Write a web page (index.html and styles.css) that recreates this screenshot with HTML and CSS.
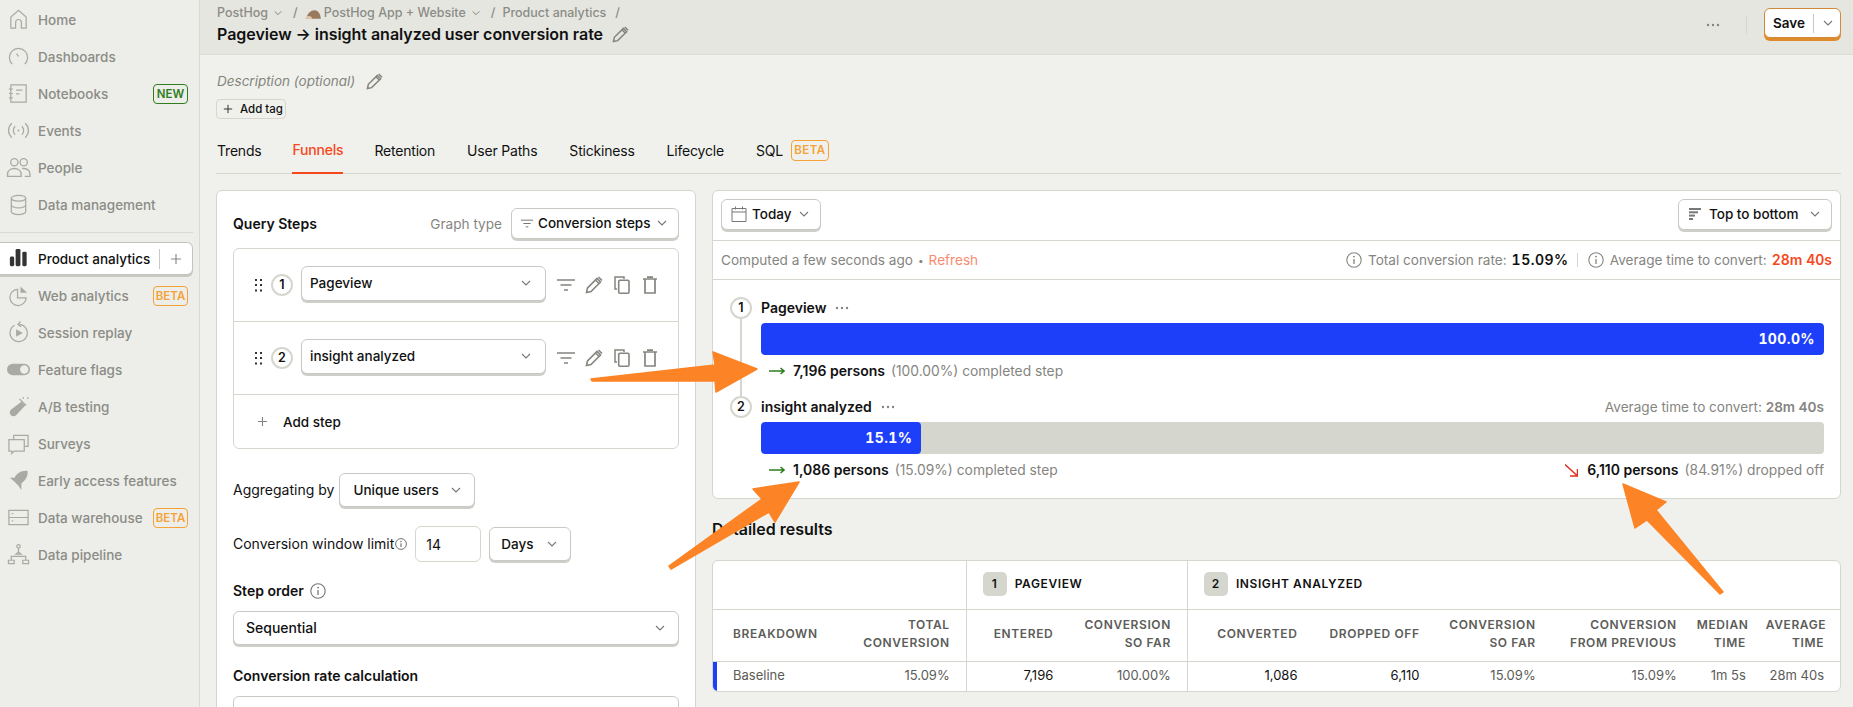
FILE: index.html
```html
<!DOCTYPE html>
<html lang="en">
<head>
  <meta charset="UTF-8" />
  <meta name="viewport" content="width=device-width, initial-scale=1.0"/>
  <title>Pageview → insight analyzed user conversion rate</title>
  <link rel="stylesheet" href="styles.css">
</head>
<body>

  <!-- shared icons -->
  <svg class="icon-defs" aria-hidden="true">
    <symbol id="chev" viewBox="0 0 12 12"><path d="M2 4l4 4 4-4" fill="none" stroke="currentColor" stroke-width="1.1"/></symbol>
    <symbol id="pencil" viewBox="0 0 18 18"><path d="M1.5 16.5l1-4.5L12 2.5l3.5 3.5L6 15.5z M10.5 4l3.5 3.5 M13.5 1l3.5 3.5" fill="none" stroke="currentColor" stroke-width="1.6"/></symbol>
    <symbol id="filter" viewBox="0 0 18 12"><path d="M0 1h18M3.5 6h11M7 11h4" fill="none" stroke="currentColor" stroke-width="1.5"/></symbol>
    <symbol id="copy" viewBox="0 0 16 18"><path d="M3 13H1V1h9v2" fill="none" stroke="currentColor" stroke-width="1.5"/><rect x="4.7" y="4.2" width="10.3" height="13" rx="1.2" fill="none" stroke="currentColor" stroke-width="1.6"/></symbol>
    <symbol id="trash" viewBox="0 0 14 18"><path d="M0 3h14M4 1.2h6M2 3.5V17h10V3.5" fill="none" stroke="currentColor" stroke-width="1.7"/></symbol>
    <symbol id="info" viewBox="0 0 16 16"><circle cx="8" cy="8" r="7.2" fill="none" stroke="currentColor" stroke-width="1.1"/><path d="M8 7v5" stroke="currentColor" stroke-width="1.3"/><circle cx="8" cy="4.6" r=".9" fill="currentColor"/></symbol>
    <symbol id="plus" viewBox="0 0 12 12"><path d="M6 1v10M1 6h10" fill="none" stroke="currentColor" stroke-width="1.2"/></symbol>
    <symbol id="dots" viewBox="0 0 14 4"><circle cx="2" cy="2" r="1.2" fill="currentColor"/><circle cx="7" cy="2" r="1.2" fill="currentColor"/><circle cx="12" cy="2" r="1.2" fill="currentColor"/></symbol>
    <symbol id="drag" viewBox="0 0 7 13"><g fill="#333"><rect width="2" height="2"/><rect x="5" width="2" height="2"/><rect y="5" width="2" height="2"/><rect x="5" y="5" width="2" height="2"/><rect y="10.5" width="2" height="2"/><rect x="5" y="10.5" width="2" height="2"/></g></symbol>
    <symbol id="arrow-right" viewBox="0 0 16 8"><path d="M0 4h15M11.5 1l3.5 3-3.5 3" fill="none" stroke="#2f7d1f" stroke-width="1.5"/></symbol>
  </svg>

  <aside class="sidebar">
    <ul class="nav">
      <li class="nav-item">
        <svg class="nav-icon" viewBox="0 0 24 24"><path d="M4 21V9.5l8-7 8 7V21h-5v-6a3 3 0 0 0-6 0v6z"/></svg>
        <span>Home</span>
      </li>
      <li class="nav-item">
        <svg class="nav-icon" viewBox="0 0 24 24"><path d="M5.5 20a9.5 9.5 0 1 1 13 0M10 9l2 3"/></svg>
        <span>Dashboards</span>
      </li>
      <li class="nav-item">
        <svg class="nav-icon" viewBox="0 0 24 24"><path d="M4 3h16v18H4zM2 7.5h4M2 12h4M2 16.5h4M9.5 8.5h6.500M9.500 12.500h3.500"/></svg>
        <span>Notebooks</span>
        <em class="badge badge-new">NEW</em>
      </li>
      <li class="nav-item">
        <svg class="nav-icon" viewBox="0 0 24 24"><path d="M5 4.5c-4.500 4.500-4.500 10.500 0 15M19 4.500c4.500 4.500 4.500 10.500 0 15M8.500 7.500c-2.500 2.500-2.500 6.500 0 9M15.500 7.500c2.500 2.500 2.500 6.500 0 9"/><circle cx="12" cy="12" r="1" class="solid"/></svg>
        <span>Events</span>
      </li>
      <li class="nav-item">
        <svg class="nav-icon nav-icon-wide" viewBox="0 0 24 24"><circle cx="8" cy="7" r="3.500"/><circle cx="17" cy="7" r="3.500"/><path d="M1.500 20.500v-2c0-3.500 3-5.500 6.500-5.500s6.500 2 6.500 5.500v2zM15.500 13c4-.5 7.500 1.500 7.500 5v2.500h-5"/></svg>
        <span>People</span>
      </li>
      <li class="nav-item">
        <svg class="nav-icon" viewBox="0 0 24 24"><ellipse cx="12" cy="5.500" rx="7.500" ry="3"/><path d="M4.500 5.500v14c0 1.500 3.500 3 7.500 3s7.500-1.500 7.500-3v-14M4.500 12.500c0 1.500 3.500 3 7.500 3s7.500-1.500 7.500-3"/></svg>
        <span>Data management</span>
      </li>
    </ul>

    <hr class="nav-divider">

    <div class="nav-active">
      <svg class="nav-icon" viewBox="0 0 24 24"><g class="solid-dark"><rect x="3" y="10" width="4.500" height="10" rx="1.500"/><rect x="9" y="2" width="5" height="18" rx="1.500"/><rect x="16" y="5" width="4.500" height="15" rx="1.500"/></g></svg>
      <span class="nav-active-label">Product analytics</span>
      <i class="nav-active-sep"></i>
      <svg class="nav-active-plus"><use href="#plus"/></svg>
    </div>

    <ul class="nav">
      <li class="nav-item">
        <svg class="nav-icon" viewBox="0 0 24 24"><path d="M11 5.500a8.500 8.500 0 1 0 9 9h-9z"/><path d="M14 2.500l7 6.500h-7z" class="solid"/></svg>
        <span>Web analytics</span>
        <em class="badge badge-beta">BETA</em>
      </li>
      <li class="nav-item">
        <svg class="nav-icon" viewBox="0 0 24 24"><path d="M8 4.500a9 9 0 1 0 5-1M14 .5l-2.500 3 3 2.500"/><path d="M9.500 8.500l7 4-7 4z" class="solid"/></svg>
        <span>Session replay</span>
      </li>
      <li class="nav-item">
        <svg class="nav-icon nav-icon-wide" viewBox="0 0 24 24"><rect x="1" y="6.500" width="22" height="11" rx="5.500" class="solid"/><circle cx="17.500" cy="12" r="4" class="knockout"/></svg>
        <span>Feature flags</span>
      </li>
      <li class="nav-item">
        <svg class="nav-icon" viewBox="0 0 24 24"><path d="M15 7l4 4-9.500 10c-1.500 1.500-4 1.500-5.500 0s-1.500-4 0-5.500z" class="solid"/><path d="M13 4l7 7M17 2v2M21 4l1.500-1.500"/></svg>
        <span>A/B testing</span>
      </li>
      <li class="nav-item">
        <svg class="nav-icon" viewBox="0 0 24 24"><path d="M7 8V3.500h15V15h-4"/><path d="M2 8h16v12H7.500l-2.500 2.500V20H2z"/></svg>
        <span>Surveys</span>
      </li>
      <li class="nav-item">
        <svg class="nav-icon" viewBox="0 0 24 24"><path d="M21.500 2c-7-.5-11 2.500-13.500 7H3l4 3.500 4.500 4.500 3.500 5V15c4-3 7-7 6.500-13z" class="solid"/></svg>
        <span>Early access features</span>
      </li>
      <li class="nav-item">
        <svg class="nav-icon" viewBox="0 0 24 24"><path d="M2 4.500h20v15H2zM2 12h20M5 8h1.500M5 15.500h1.500"/></svg>
        <span>Data warehouse</span>
        <em class="badge badge-beta">BETA</em>
      </li>
      <li class="nav-item">
        <svg class="nav-icon" viewBox="0 0 24 24"><circle cx="12" cy="3.500" r="1.800"/><path d="M12 5.500v4M9.500 11.500h5l-2.500-2zM4.500 18v-4h15v4M1.500 18h6v3.500h-6zM16.500 18h6v3.500h-6z"/></svg>
        <span>Data pipeline</span>
      </li>
    </ul>
  </aside>

  <main class="main">
    <header class="topbar">
      <div>
        <div class="crumbs">
          <span>PostHog</span><svg class="chev"><use href="#chev"/></svg>
          <span class="crumb-sep">/</span>
          <svg class="hedgehog" viewBox="0 0 16 10"><path d="M1 9 Q3 1 9 1 Q14 1 15 9z" fill="#9a7a5f"/><path d="M0 9c1-3 4-3 6-2l1 2.500z" fill="#e3c7a8"/></svg>
          <span>PostHog App + Website</span><svg class="chev"><use href="#chev"/></svg>
          <span class="crumb-sep">/</span>
          <span>Product analytics</span>
          <span class="crumb-sep">/</span>
        </div>
        <h1 class="title">Pageview → insight analyzed user conversion rate <svg class="title-edit"><use href="#pencil"/></svg></h1>
      </div>
      <div class="topbar-actions">
        <svg class="more"><use href="#dots"/></svg>
        <i class="topbar-sep"></i>
        <div class="save">
          <span>Save</span>
          <i class="save-sep"></i>
          <svg class="chev"><use href="#chev"/></svg>
        </div>
      </div>
    </header>

    <div class="content">
      <div class="desc">Description (optional) <svg class="desc-edit"><use href="#pencil"/></svg></div>
      <div class="add-tag"><svg class="add-tag-plus"><use href="#plus"/></svg> Add tag</div>

      <nav class="tabs">
        <span class="tab">Trends</span>
        <span class="tab tab-active">Funnels</span>
        <span class="tab">Retention</span>
        <span class="tab">User Paths</span>
        <span class="tab">Stickiness</span>
        <span class="tab">Lifecycle</span>
        <span class="tab">SQL <em class="badge badge-beta badge-tab">BETA</em></span>
      </nav>

      <div class="columns">
        <section class="query card">
          <div class="query-head">
            <strong>Query Steps</strong>
            <span class="muted graph-label">Graph type</span>
            <div class="btn btn-graph">
              <svg class="btn-filter"><use href="#filter"/></svg>
              <span>Conversion steps</span>
              <svg class="chev"><use href="#chev"/></svg>
            </div>
          </div>

          <div class="steps">
            <div class="step-row">
              <svg class="drag"><use href="#drag"/></svg>
              <span class="step-num">1</span>
              <div class="btn btn-step"><span>Pageview</span><svg class="chev"><use href="#chev"/></svg></div>
              <div class="step-tools">
                <svg class="tool-filter"><use href="#filter"/></svg>
                <svg class="tool-pencil"><use href="#pencil"/></svg>
                <svg class="tool-copy"><use href="#copy"/></svg>
                <svg class="tool-trash"><use href="#trash"/></svg>
              </div>
            </div>
            <div class="step-row">
              <svg class="drag"><use href="#drag"/></svg>
              <span class="step-num">2</span>
              <div class="btn btn-step"><span>insight analyzed</span><svg class="chev"><use href="#chev"/></svg></div>
              <div class="step-tools">
                <svg class="tool-filter"><use href="#filter"/></svg>
                <svg class="tool-pencil"><use href="#pencil"/></svg>
                <svg class="tool-copy"><use href="#copy"/></svg>
                <svg class="tool-trash"><use href="#trash"/></svg>
              </div>
            </div>
            <div class="add-step"><svg class="add-step-plus"><use href="#plus"/></svg> <strong>Add step</strong></div>
          </div>

          <div class="form-row form-row-agg">
            <span>Aggregating by</span>
            <div class="btn btn-agg"><span>Unique users</span><svg class="chev"><use href="#chev"/></svg></div>
          </div>

          <div class="form-row form-row-window">
            <span>Conversion window limit</span>
            <svg class="info-small"><use href="#info"/></svg>
            <div class="num-input">14</div>
            <div class="btn btn-days"><span>Days</span><svg class="chev"><use href="#chev"/></svg></div>
          </div>

          <div class="field-label">Step order <svg class="info-label"><use href="#info"/></svg></div>
          <div class="btn btn-full"><span>Sequential</span><svg class="chev"><use href="#chev"/></svg></div>

          <div class="field-label">Conversion rate calculation</div>
          <div class="btn btn-full"></div>
        </section>

        <div class="results-col">
          <section class="card">
            <div class="viz-toolbar">
              <div class="btn btn-date">
                <svg class="calendar" viewBox="0 0 16 16"><path d="M1 2.500h14v13H1zM1 6h14M4.500 .5v3M11.500 .5v3" fill="none" stroke="#777" stroke-width="1"/></svg>
                <span>Today</span>
                <svg class="chev"><use href="#chev"/></svg>
              </div>
              <div class="btn btn-layout">
                <svg class="layout-icon" viewBox="0 0 12 12"><g fill="#777"><rect width="12" height="2"/><rect y="3.300" width="9" height="2"/><rect y="6.600" width="6" height="2"/><rect y="10" width="4" height="2"/></g></svg>
                <span>Top to bottom</span>
                <svg class="chev"><use href="#chev"/></svg>
              </div>
            </div>

            <div class="viz-meta">
              <span class="muted">Computed a few seconds ago</span>
              <span class="meta-dot">•</span>
              <span class="refresh">Refresh</span>
              <div class="meta-stats">
                <svg class="info-stat"><use href="#info"/></svg>
                <span class="muted">Total conversion rate:</span>
                <b class="stat-value stat-rate">15.09%</b>
                <i class="stat-sep"></i>
                <svg class="info-stat"><use href="#info"/></svg>
                <span class="muted">Average time to convert:</span>
                <b class="stat-value stat-hot">28m 40s</b>
              </div>
            </div>

            <div class="funnel">
              <div class="funnel-step">
                <div class="rail"><span class="step-num">1</span><i class="rail-line"></i></div>
                <div class="funnel-body">
                  <div class="funnel-head">
                    <strong>Pageview</strong>
                    <svg class="more"><use href="#dots"/></svg>
                  </div>
                  <div class="bar-track"><div class="bar-fill" style="width: 100%">100.0%</div></div>
                  <div class="funnel-foot">
                    <svg class="arrow-right"><use href="#arrow-right"/></svg>
                    <strong>7,196 persons</strong>
                    <span class="muted">(100.00%) completed step</span>
                  </div>
                </div>
              </div>
              <div class="funnel-step">
                <div class="rail"><span class="step-num">2</span></div>
                <div class="funnel-body">
                  <div class="funnel-head">
                    <strong>insight analyzed</strong>
                    <svg class="more"><use href="#dots"/></svg>
                    <span class="muted funnel-time">Average time to convert: <b>28m 40s</b></span>
                  </div>
                  <div class="bar-track"><div class="bar-fill" style="width: 15.09%">15.1%</div></div>
                  <div class="funnel-foot">
                    <svg class="arrow-right"><use href="#arrow-right"/></svg>
                    <strong>1,086 persons</strong>
                    <span class="muted">(15.09%) completed step</span>
                    <span class="dropped">
                      <svg class="arrow-down" viewBox="0 0 13 13"><path d="M0 .5l12 11M5 12h7.500V5" fill="none" stroke="#e0301e" stroke-width="1.500"/></svg>
                      <strong>6,110 persons</strong>
                      <span class="muted">(84.91%) dropped off</span>
                    </span>
                  </div>
                </div>
              </div>
            </div>
          </section>

          <h2 class="section-title">Detailed results</h2>

          <div class="card table-wrap">
            <table class="results">
              <colgroup>
                <col class="col-breakdown"><col class="col-total">
                <col class="col-entered"><col class="col-sofar">
                <col class="col-converted"><col class="col-dropped"><col class="col-sofar2"><col class="col-prev"><col class="col-median"><col class="col-avg">
              </colgroup>
              <thead>
                <tr class="row-group">
                  <th colspan="2"></th>
                  <th colspan="2" class="group-start"><span class="group-title"><span class="group-num">1</span>Pageview</span></th>
                  <th colspan="6" class="group-start"><span class="group-title"><span class="group-num">2</span>insight analyzed</span></th>
                </tr>
                <tr class="row-cols">
                  <th class="cell-left">Breakdown</th>
                  <th>Total<br>conversion</th>
                  <th class="group-start">Entered</th>
                  <th>Conversion<br>so far</th>
                  <th class="group-start">Converted</th>
                  <th>Dropped off</th>
                  <th>Conversion<br>so far</th>
                  <th>Conversion<br>from previous</th>
                  <th>Median<br>time</th>
                  <th>Average<br>time</th>
                </tr>
              </thead>
              <tbody>
                <tr>
                  <td class="cell-left cell-baseline">Baseline</td>
                  <td>15.09%</td>
                  <td class="group-start cell-strong">7,196</td>
                  <td>100.00%</td>
                  <td class="group-start cell-strong">1,086</td>
                  <td class="cell-strong">6,110</td>
                  <td>15.09%</td>
                  <td>15.09%</td>
                  <td>1m 5s</td>
                  <td>28m 40s</td>
                </tr>
              </tbody>
            </table>
          </div>
        </div>
      </div>
    </div>
  </main>

  <!-- annotation arrows drawn on top of the screenshot -->
  <svg class="callouts" viewBox="0 0 1853 707" aria-hidden="true">
    <polygon points="592,381 591,379 715,365 713,352 757,369 716,392 715,381"/>
    <polygon points="799,482 753,489 762,499 669,566 671,569 769,512 775,522"/>
    <polygon points="1623,484 1666,502 1656,510 1723,592 1720,594 1647,520 1635,528"/>
  </svg>

</body>
</html>
```

FILE: styles.css
```css
* {
  box-sizing: border-box;
}

html, body {
  margin: 0;
  height: 707px;
  overflow: hidden;
}

body {
  position: relative;
  display: flex;
  background-color: #f0f1ec;
  color: #111;
  font-family: Inter, "Liberation Sans", sans-serif;
  font-size: 14px;
  line-height: 20px;
}

svg {
  display: block;
  flex: none;
}

em {
  font-style: normal;
}

.icon-defs {
  display: none;
}

.muted {
  color: #85857f;
  font-size: 13.6px;
  font-weight: 400;
}

strong {
  font-weight: 600;
}

.chev {
  width: 12px;
  height: 12px;
  color: #777;
}

/* sidebar */
.sidebar {
  flex: none;
  width: 200px;
  height: 707px;
  padding-top: 1px;
  background-color: #edeee9;
  border-right: 1px solid #d9dad3;
  white-space: nowrap;
}

.nav {
  list-style: none;
  margin: 0;
  padding: 0;
}

.nav-item {
  display: flex;
  align-items: center;
  gap: 8px;
  height: 37px;
  padding: 0 11px 0 7px;
  color: #8b8c86;
  font-size: 13.5px;
  font-weight: 500;
}

.nav-icon {
  width: 23px;
  height: 23px;
  fill: none;
  stroke: #a9aaa4;
  stroke-width: 1.3;
}

.nav-icon-wide {
  margin-left: -1px;
  margin-right: -1px;
  width: 25px;
  height: 25px;
}

.nav-icon .solid {
  fill: #a9aaa4;
  stroke: none;
}

.nav-icon .knockout {
  fill: #edeee9;
  stroke: none;
}

.nav-icon .solid-dark {
  fill: #333;
  stroke: none;
}

.badge {
  margin-left: auto;
  width: 35px;
  height: 20px;
  border: 1px solid;
  border-radius: 4px;
  font-size: 11.5px;
  font-weight: 600;
  line-height: 18px;
  text-align: center;
}

.badge-new {
  color: #2f7d1f;
  border-color: #2f7d1f;
}

.badge-beta {
  color: #f5a238;
  border-color: #f5a238;
}

.badge-tab {
  display: inline-block;
  width: 38px;
  height: 21px;
  margin-left: 8px;
  line-height: 19px;
  letter-spacing: 0.4px;
}

.nav-divider {
  height: 1px;
  margin: 9px 6px 9px 0;
  border: 0;
  background-color: #d9dad3;
}

.nav-active {
  display: flex;
  align-items: center;
  gap: 8px;
  width: 193px;
  height: 33px;
  padding-left: 7px;
  margin-bottom: 2px;
  background-color: #fff;
  border: 1px solid #c4c4bf;
  border-left: 0;
  border-radius: 0 6px 6px 0;
  box-shadow: 0 2px 0 #c9c9c4;
  font-size: 13.5px;
  font-weight: 500;
}

.nav-active-label {
  flex: 1;
}

.nav-active-sep {
  width: 1px;
  height: 20px;
  background-color: #c9c9c4;
}

.nav-active-plus {
  width: 12px;
  height: 12px;
  margin: 0 10px 0 2px;
  color: #8b8c86;
}

/* top bar */
.main {
  flex: 1;
  min-width: 0;
}

.topbar {
  display: flex;
  justify-content: space-between;
  height: 55px;
  padding: 3px 12px 0 17px;
  background-color: #e5e6e0;
  border-bottom: 1px solid #dcddd6;
}

.crumbs {
  display: flex;
  align-items: center;
  height: 20px;
  color: #8b8c86;
  font-size: 12.5px;
  font-weight: 500;
}

.crumbs .chev {
  width: 10px;
  height: 10px;
  margin-left: 5px;
}

.crumb-sep {
  margin: 0 7px 0 10px;
}

.crumb-sep:last-child {
  margin: 0 0 0 9px;
}

.hedgehog {
  width: 17px;
  height: 11px;
  margin-right: 2px;
  margin-top: 2px;
}

.title {
  display: flex;
  align-items: center;
  gap: 9px;
  margin: 1px 0 0;
  font-size: 16px;
  font-weight: 600;
  line-height: 20px;
  letter-spacing: -0.03px;
}

.title-edit {
  width: 17px;
  height: 17px;
  color: #85857f;
}

.topbar-actions {
  display: flex;
  align-items: flex-start;
  padding-top: 5px;
}

.more {
  width: 14px;
  height: 4px;
  color: #85857f;
}

.topbar-actions .more {
  margin-top: 15px;
}

.topbar-sep {
  width: 1px;
  height: 18px;
  margin: 8px 17px 0 26px;
  background-color: #d5d6ce;
}

.save {
  display: flex;
  align-items: center;
  width: 77px;
  height: 30px;
  padding-left: 8px;
  background-color: #fff;
  border: 1px solid #d08a3a;
  border-radius: 6px;
  box-shadow: 0 3px 0 #e08a2e;
  font-weight: 600;
  font-size: 13.5px;
}

.save-sep {
  width: 1px;
  height: 19px;
  margin: 0 8px;
  background-color: #c9c9c4;
}

/* page content */
.content {
  padding: 16px 12px 0 16px;
}

.desc {
  display: flex;
  align-items: center;
  gap: 11px;
  padding-left: 1px;
  color: #85857f;
  font-size: 13.5px;
  font-style: italic;
}

.desc-edit {
  width: 17px;
  height: 17px;
}

.add-tag {
  display: flex;
  align-items: center;
  gap: 7px;
  width: 70px;
  height: 20px;
  margin-top: 8px;
  padding-left: 6px;
  border: 1px solid #d5d6ce;
  border-radius: 4px;
  font-size: 11.5px;
  font-weight: 500;
}

.add-tag-plus {
  width: 10px;
  height: 10px;
  color: #333;
}

.tabs {
  display: flex;
  gap: 32px;
  height: 47px;
  margin-top: 8px;
  padding-left: 1px;
  border-bottom: 1px solid #d5d6ce;
  letter-spacing: -0.2px;
}

.tab {
  display: flex;
  align-items: center;
  height: 47px;
}

.tab-active {
  margin-left: -1px;
  margin-right: -1px;
  color: #f7471d;
  font-weight: 500;
  border-bottom: 2px solid #f7471d;
}

.columns {
  display: grid;
  grid-template-columns: 480px 1fr;
  column-gap: 16px;
  margin-top: 16px;
}

.card {
  background-color: #fff;
  border: 1px solid #d5d6ce;
  border-radius: 6px;
}

/* query panel */
.query {
  height: 600px;
  padding: 16px;
}

.query-head {
  display: flex;
  align-items: center;
  height: 32px;
}

.query-head strong {
  padding-top: 2px;
}

.graph-label {
  margin-left: auto;
  margin-right: 9px;
  padding-top: 2px;
}

.btn {
  display: flex;
  align-items: center;
  background-color: #fff;
  border: 1px solid #c9c9c4;
  border-radius: 6px;
  box-shadow: 0 2px 0 #cfcfca;
  font-weight: 500;
  font-size: 13.5px;
}

.btn .chev {
  margin-left: auto;
}

.btn-graph {
  width: 168px;
  height: 31px;
  padding: 0 10px 0 9px;
}

.btn-filter {
  width: 12px;
  height: 9px;
  margin-right: 5px;
  color: #777;
}

.steps {
  height: 201px;
  margin-top: 9px;
  border: 1px solid #d5d6ce;
  border-radius: 6px;
}

.step-row {
  display: flex;
  align-items: center;
  height: 73px;
  padding-left: 21px;
  border-bottom: 1px solid #d5d6ce;
}

.drag {
  width: 7px;
  height: 13px;
}

.step-num {
  display: flex;
  flex: none;
  align-items: center;
  justify-content: center;
  width: 22px;
  height: 22px;
  background-color: #fff;
  border: 2px solid #d5d6ce;
  border-radius: 50%;
  font-size: 12.5px;
  font-weight: 600;
}

.step-row .step-num {
  margin-left: 9px;
}

.btn-step {
  width: 245px;
  height: 35px;
  margin-left: 8px;
  margin-top: -4px;
  padding: 0 13px 0 8px;
}

.step-tools {
  display: flex;
  align-items: center;
  margin-left: 11px;
  color: #85857f;
}

.tool-filter {
  width: 18px;
  height: 12px;
}

.tool-pencil {
  width: 18px;
  height: 18px;
  margin-left: 10px;
}

.tool-copy {
  width: 16px;
  height: 18px;
  margin-left: 11px;
}

.tool-trash {
  width: 14px;
  height: 18px;
  margin-left: 13px;
}

.add-step {
  display: flex;
  align-items: center;
  gap: 15px;
  height: 53px;
  padding-left: 23px;
}

.add-step strong {
  font-weight: 500;
  font-size: 13.5px;
}

.add-step-plus {
  width: 11px;
  height: 11px;
  color: #85857f;
}

.form-row {
  display: flex;
  align-items: center;
}

.form-row-agg {
  margin-top: 24px;
  gap: 5px;
}

.form-row-window {
  margin-top: 19px;
}

.btn-agg {
  width: 136px;
  height: 34px;
  padding: 0 12px 0 13px;
}

.info-small {
  width: 12px;
  height: 12px;
  margin-left: 1px;
  color: #555;
}

.num-input {
  width: 66px;
  height: 36px;
  margin-left: 8px;
  padding: 8px 10px;
  border: 1px solid #d5d6ce;
  border-radius: 6px;
}

.btn-days {
  width: 82px;
  height: 34px;
  margin-left: 8px;
  padding: 0 12px 0 11px;
}

.field-label {
  display: flex;
  align-items: center;
  gap: 6px;
  margin-top: 19px;
  font-weight: 600;
}

.info-label {
  width: 16px;
  height: 16px;
  color: #777;
}

.btn-full {
  height: 34px;
  margin-top: 10px;
  padding: 0 12px;
  font-size: 14px;
}

.btn-full + .field-label {
  margin-top: 21px;
}

/* funnel card */
.viz-toolbar {
  display: flex;
  justify-content: space-between;
  height: 50px;
  padding: 8px 8px 0;
  border-bottom: 1px solid #d5d6ce;
}

.btn-date {
  width: 100px;
  height: 31px;
  padding: 0 10px 2px 9px;
}

.calendar {
  width: 16px;
  height: 16px;
  margin-right: 5px;
}

.btn-layout {
  width: 154px;
  height: 31px;
  padding: 0 10px 2px;
}

.layout-icon {
  width: 12px;
  height: 12px;
  margin-right: 8px;
}

.viz-meta {
  display: flex;
  align-items: center;
  height: 39px;
  padding: 0 8px;
  border-bottom: 1px solid #d5d6ce;
}

.meta-dot {
  margin: 0 5px;
  color: #85857f;
  font-size: 10px;
}

.refresh {
  color: #f98a6f;
  font-size: 13.6px;
}

.meta-stats {
  display: flex;
  align-items: center;
  margin-left: auto;
}

.info-stat {
  width: 16px;
  height: 16px;
  margin-right: 6px;
  color: #85857f;
}

.stat-value {
  margin-left: 5px;
  font-weight: 600;
  font-variant-numeric: tabular-nums;
}

.stat-rate {
  letter-spacing: 0.5px;
}

.stat-hot {
  color: #f7471d;
}

.stat-sep {
  width: 1px;
  height: 14px;
  margin: 0 10px 0 8px;
  background-color: #d5d6ce;
}

.funnel {
  padding: 17px 16px 3px 17px;
}

.funnel-step {
  display: flex;
  height: 99px;
}

.rail {
  display: flex;
  flex: none;
  flex-direction: column;
  align-items: center;
  width: 22px;
  margin-right: 9px;
}

.rail-line {
  flex: 1;
  width: 2px;
  background-color: #d5d6ce;
}

.funnel-body {
  flex: 1;
  min-width: 0;
}

.funnel-head {
  display: flex;
  align-items: center;
  gap: 9px;
  height: 22px;
}

.funnel-time {
  margin-left: auto;
}

.funnel-time b {
  font-weight: 600;
}

.bar-track {
  height: 32px;
  margin-top: 4px;
  background-color: #d5d6ce;
  border-radius: 4px;
  overflow: hidden;
}

.bar-fill {
  height: 32px;
  padding-right: 9px;
  background-color: #1d3ffa;
  border-radius: 4px;
  color: #fff;
  font-size: 14px;
  font-weight: 700;
  font-variant-numeric: tabular-nums;
  line-height: 32px;
  text-align: right;
  letter-spacing: 0.4px;
}

.funnel-foot {
  display: flex;
  align-items: center;
  gap: 6px;
  height: 20px;
  margin-top: 6px;
  padding-left: 8px;
}

.funnel-foot .muted {
  font-size: 13.8px;
}

.arrow-right {
  width: 16px;
  height: 8px;
  margin-right: 2px;
}

.dropped {
  display: flex;
  align-items: center;
  gap: 6px;
  margin-left: auto;
}

.arrow-down {
  width: 13px;
  height: 13px;
  margin-right: 3px;
}

/* results table */
.section-title {
  margin: 20px 0 21px;
  font-size: 16px;
  font-weight: 600;
  line-height: 20px;
}

.table-wrap {
  overflow: hidden;
}

.results {
  width: 100%;
  table-layout: fixed;
  border-collapse: collapse;
  font-size: 13px;
}

.col-breakdown { width: 133px; }
.col-total { width: 120px; }
.col-entered { width: 103px; }
.col-sofar { width: 118px; }
.col-converted { width: 126px; }
.col-dropped { width: 122px; }
.col-sofar2 { width: 116px; }
.col-prev { width: 141px; }
.col-median { width: 69px; }
.col-avg { width: 78px; }

.results th {
  padding: 0 16px 2px 4px;
  border-bottom: 1px solid #d5d6ce;
  color: #5c5c58;
  font-size: 12px;
  font-weight: 600;
  line-height: 18px;
  letter-spacing: 0.6px;
  text-align: right;
  text-transform: uppercase;
}

.results .group-start {
  border-left: 1px solid #d5d6ce;
}

.row-group th {
  height: 48px;
  text-align: left;
  padding-left: 16px;
  color: #111;
}

.group-title {
  display: flex;
  align-items: center;
  gap: 8px;
}

.group-num {
  display: flex;
  align-items: center;
  justify-content: center;
  width: 24px;
  height: 24px;
  background-color: #d5d6ce;
  border-radius: 5px;
}

.row-cols th {
  height: 52px;
}

.results .cell-left {
  padding-left: 20px;
  text-align: left;
}

.results td {
  height: 30px;
  padding: 0 16px 2px 4px;
  color: #5c5c58;
  text-align: right;
}

.results .cell-strong {
  color: #111;
}

.results .cell-baseline {
  box-shadow: inset 4px 0 0 #1d3ffa;
}

/* annotation arrows */
.callouts {
  position: absolute;
  top: 0;
  left: 0;
  width: 1853px;
  height: 707px;
  pointer-events: none;
  fill: #fd8426;
  stroke: #fd8426;
  stroke-width: 1.5;
  stroke-linejoin: round;
}
```
